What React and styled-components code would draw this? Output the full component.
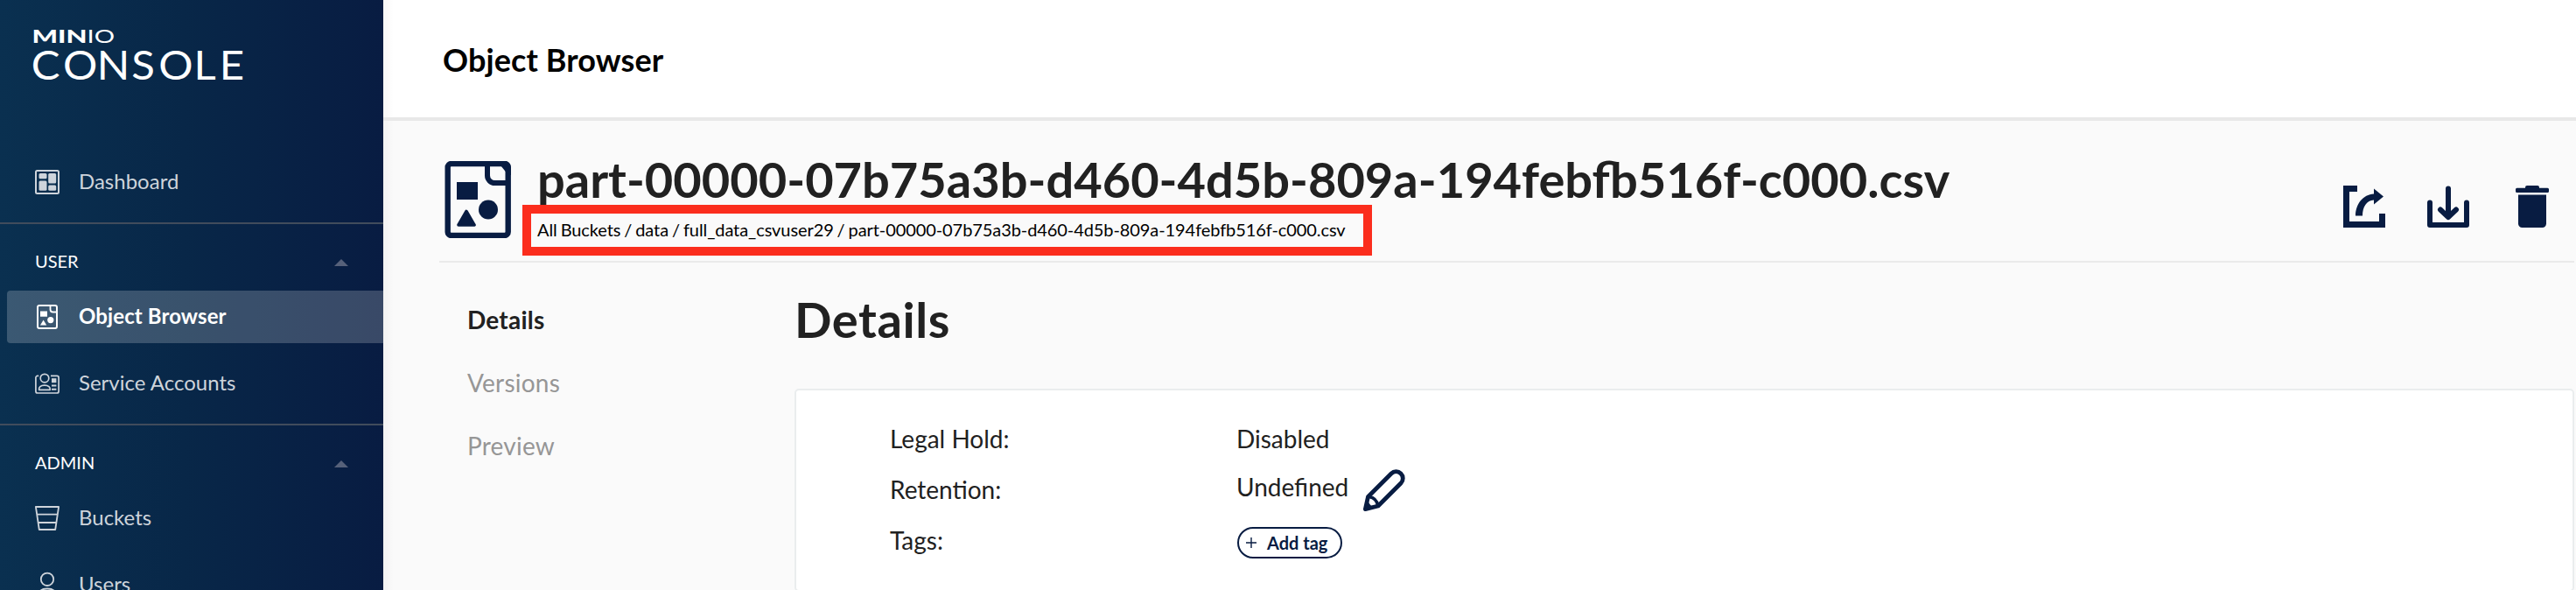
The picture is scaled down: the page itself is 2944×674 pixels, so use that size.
import React from "react";
import styled, { createGlobalStyle } from "styled-components";

const Global = createGlobalStyle`
  *, *::before, *::after { box-sizing: border-box; }
  body {
    margin: 0;
    background: #fafafa;
    font-family: Lato, sans-serif;
    color: #212121;
    overflow: hidden;
  }
`;

const NAVY = "#081c42";

const Page = styled.div`
  display: flex;
  height: 674px;
  overflow: hidden;
`;

/* ---------- Sidebar ---------- */

const Sidebar = styled.aside`
  flex: 0 0 438px;
  height: 100%;
  overflow: hidden;
  background: linear-gradient(90deg, #0a3050 0%, #082748 48%, #081c42 100%);
`;

const Brand = styled.div`
  height: 178px;
  padding: 20px 0 0 26px;
`;

const BrandLogo = styled.svg`
  display: block;
  width: 280px;
  height: 90px;
  overflow: visible;
  fill: #fff;
  font-family: Lato, sans-serif;
`;

const NavGroup = styled.nav`
  display: flex;
  flex-direction: column;
  gap: 16px;
  padding: 0 0 16px;
  border-bottom: 2px solid #414c5c;
`;

const NavItem = styled.a`
  display: flex;
  align-items: center;
  height: 60px;
  margin-left: 8px;
  padding-left: 32px;
  border-radius: 4px 0 0 4px;
  color: ${(p) => (p.$active ? "#fff" : "#ced4db")};
  background: ${(p) => (p.$active ? "rgba(255, 255, 255, 0.2)" : "transparent")};
  font-size: 24px;
  font-weight: ${(p) => (p.$active ? 700 : 400)};
  letter-spacing: ${(p) => (p.$active ? "0.1px" : "0")};
  line-height: 28px;
`;

const NavIcon = styled.svg`
  flex: none;
  display: block;
  width: 28px;
  height: 28px;
  margin-right: 22px;
  overflow: visible;
`;

const NavLabel = styled.span`
  padding-bottom: 2px;
`;

const SectionHeader = styled.div`
  display: flex;
  align-items: center;
  justify-content: space-between;
  height: 76px;
  padding: 8px 40px 0 40px;
  margin-bottom: -16px;
  color: #fff;
  font-size: 20px;
  line-height: 24px;
`;

const Caret = styled.span`
  width: 0;
  height: 0;
  margin-top: 4px;
  border-left: 8px solid transparent;
  border-right: 8px solid transparent;
  border-bottom: 8px solid #56617a;
`;

/* ---------- Main ---------- */

const Main = styled.main`
  flex: 1;
  min-width: 0;
  background: linear-gradient(90deg, rgba(0, 0, 0, 0.03), transparent 12px), #fafafa;
`;

const PageHeader = styled.header`
  height: 138px;
  padding: 46px 68px 0;
  border-bottom: 4px solid #e8e8e8;
  background: linear-gradient(90deg, rgba(0, 0, 0, 0.03), transparent 12px), #fff;
  color: #000;
  font-size: 36px;
  font-weight: 700;
  letter-spacing: 0.1px;
  line-height: 44px;
`;

const Content = styled.div`
  padding: 0 2px 0 64px;
`;

const ObjectBar = styled.section`
  display: flex;
  height: 162px;
  padding: 46px 24px 0 6px;
  border-bottom: 2px solid #eaeaea;
`;

const ObjectIcon = styled.svg`
  flex: none;
  display: block;
  width: 76px;
  height: 88px;
`;

const ObjectText = styled.div`
  flex: 1;
  padding-left: 30px;
`;

const ObjectName = styled.h1`
  margin: -13px 0 0;
  font-size: 56px;
  font-weight: 700;
  line-height: 68px;
  white-space: nowrap;
`;

const Breadcrumb = styled.div`
  position: relative;
  width: fit-content;
  margin-top: 11px;
  color: #000;
  font-size: 20px;
  letter-spacing: -0.08px;
  word-spacing: -1.1px;
  line-height: 24px;
  white-space: nowrap;
`;

const Highlight = styled.div`
  position: absolute;
  top: -16px;
  left: -17px;
  width: 971px;
  height: 58px;
  border: 10px solid #fb2d1d;
`;

const Actions = styled.div`
  display: flex;
  gap: 48px;
  padding: 28px 0 0;
`;

const ActionIcon = styled.svg`
  display: block;
  width: 48px;
  height: 48px;
  fill: ${NAVY};
`;

const Columns = styled.div`
  display: flex;
`;

const Tabs = styled.div`
  flex: 0 0 406px;
  padding: 29px 0 0 32px;
`;

const Tab = styled.div`
  height: 72px;
  line-height: 72px;
  font-size: 28px;
  font-weight: ${(p) => (p.$active ? 700 : 400)};
  letter-spacing: 0.22px;
  color: ${(p) => (p.$active ? "#212121" : "#969696")};
`;

const Panel = styled.div`
  flex: 1;
`;

const PanelTitle = styled.h2`
  margin: 0;
  padding: 31px 0 0;
  height: 144px;
  font-size: 56px;
  font-weight: 700;
  letter-spacing: 0.6px;
  line-height: 68px;
`;

const Card = styled.div`
  height: 232px;
  padding: 26px 107px 0;
  border: 2px solid #eaedee;
  border-radius: 5px;
  background: #fff;
`;

const Row = styled.div`
  display: grid;
  grid-template-columns: 396px 1fr;
  align-items: center;
  height: 58px;
  font-size: 28px;
  line-height: 34px;
`;

const Value = styled.div`
  display: flex;
  align-items: center;
`;

const Retention = styled.span`
  width: 145px;
  padding-bottom: 6px;
`;

const EditIcon = styled.svg`
  display: block;
  width: 48px;
  height: 48px;
  margin-top: 2px;
`;

const TagButton = styled.button`
  display: flex;
  align-items: center;
  gap: 12px;
  width: 120px;
  height: 36px;
  margin: 6px 0 0 1px;
  padding: 0 0 0 8px;
  border: 2px solid ${NAVY};
  border-radius: 18px;
  background: #fff;
  color: ${NAVY};
  font: 700 20px/24px Lato, sans-serif;
  white-space: nowrap;
`;

/* ---------- Drawings ---------- */

const DashboardIcon = () => (
  <NavIcon viewBox="0 0 28 28" fill="currentColor">
    <rect x="1" y="1" width="26" height="26" rx="1.5" fill="none" stroke="currentColor" strokeWidth="2" />
    <rect x="4.5" y="4" width="9" height="6.2" rx="1.5" />
    <rect x="15.2" y="4" width="9" height="11.4" rx="1.5" />
    <rect x="4.5" y="12.4" width="9" height="11.4" rx="1.5" />
    <rect x="15.2" y="17.6" width="9" height="6.2" rx="1.5" />
  </NavIcon>
);

const ObjectsNavIcon = () => (
  <NavIcon viewBox="0 0 28 28" fill="currentColor">
    <rect x="3" y="1" width="22" height="26" rx="2" fill="none" stroke="currentColor" strokeWidth="2" />
    <path d="M17.5 1v4.5a3 3 0 0 0 3 3H25" fill="none" stroke="currentColor" strokeWidth="1.8" />
    <rect x="6" y="7.5" width="8" height="6.2" />
    <circle cx="17.8" cy="17.6" r="3.6" />
    <path d="M9.6 17.6 13.2 23.6H6z" />
  </NavIcon>
);

const ServiceIcon = () => (
  <NavIcon viewBox="0 0 28 28" fill="none" stroke="currentColor" strokeWidth="1.7">
    <path d="M4.2 5.4H2.9a2 2 0 0 0-2 2v15.6a2 2 0 0 0 2 2h22.2a2 2 0 0 0 2-2V7.4a2 2 0 0 0-2-2H18" />
    <circle cx="11" cy="8.1" r="4.8" />
    <path d="M4.6 21.4c-.5-3.2 1.8-5.2 6.3-5.2s6.8 2 6.3 5.2z" strokeLinejoin="round" />
    <rect x="19" y="8.2" width="5.4" height="5" fill="currentColor" stroke="none" />
    <path d="M19 16.4h5.4M19 20.8h5.4" strokeWidth="2" />
  </NavIcon>
);

const BucketIcon = () => (
  <NavIcon viewBox="0 0 28 28" fill="none" stroke="currentColor" strokeWidth="1.8" strokeLinejoin="round">
    <path d="M.9 1h26.2L23.2 27H4.8zM2.2 9.7h23.6M3.4 19h21.2" />
  </NavIcon>
);

const UsersIcon = () => (
  <NavIcon viewBox="0 0 28 28" fill="none" stroke="currentColor" strokeWidth="1.8">
    <circle cx="14" cy="7.8" r="7.2" />
    <path d="M3.5 28c-.8-6.5 4-9.5 10.5-9.500S25.300 21.500 24.500 28z" />
  </NavIcon>
);

const ShareIcon = () => (
  <ActionIcon viewBox="0 0 48 48">
    <path d="M0 0h16v7H7v34h34v-9h7v16H0z" />
    <path d="M14 34.5c0-13 8.5-24.500 21-25V3.500L46 12.400 35 21.400V16.500c-8.500.5-13 8-13 18z" />
  </ActionIcon>
);

const DownloadIcon = () => (
  <ActionIcon viewBox="0 0 48 48">
    <path
      d="M3 19.500V45h42V19.500M24 3.500V34M15 27.500l9 8.500 9-8.500"
      fill="none"
      stroke={NAVY}
      strokeWidth="6"
      strokeLinecap="round"
      strokeLinejoin="round"
    />
  </ActionIcon>
);

const TrashIcon = () => (
  <ActionIcon viewBox="0 0 48 48">
    <path d="M16 2a2 2 0 0 1 2-2h12a2 2 0 0 1 2 2v.7h9.500a1.500 1.500 0 0 1 1.500 1.500V6.500A1.500 1.500 0 0 1 41.500 8h-35A1.500 1.500 0 0 1 5 6.500V4.200a1.500 1.500 0 0 1 1.500-1.500H16z" />
    <path d="M8 10.500h32V43.500a4.500 4.500 0 0 1-4.500 4.500h-23A4.500 4.500 0 0 1 8 43.500z" />
  </ActionIcon>
);

const PencilIcon = () => (
  <EditIcon viewBox="0 0 48 48" fill="none" stroke={NAVY} strokeWidth="4.8" strokeLinejoin="round">
    <path d="M5.500 31.500 32 5a7.700 7.700 0 0 1 11 11L17 42 2.400 45.600z" />
    <path d="M7 31.500c5.500 1 8.500 4 9.800 9.800" strokeWidth="3.6" />
    <path d="M2 45.800 4.500 36l5.800 7.600z" fill={NAVY} stroke="none" />
  </EditIcon>
);

const FileIcon = () => (
  <ObjectIcon viewBox="0 0 76 88" fill={NAVY}>
    <rect x="3.7" y="3" width="69" height="82" rx="4" fill="none" stroke={NAVY} strokeWidth="6.4" />
    <path d="M49 3v13.500a8.500 8.500 0 0 0 8.500 8.500H72" fill="none" stroke={NAVY} strokeWidth="6" />
    <path d="M60 0h9a7 7 0 0 1 7 7v9h-3z" />
    <rect x="14" y="24" width="24" height="20" />
    <circle cx="50" cy="55.5" r="11" />
    <path d="M25 57.500 34 73H16z" stroke={NAVY} strokeWidth="3.6" strokeLinejoin="round" />
  </ObjectIcon>
);

export default function App() {
  return (
    <Page>
      <Global />
      <Sidebar>
        <Brand>
          <BrandLogo viewBox="-12 -12 280 90">
            <text x="-1.5" y="17" fontSize="21" fontWeight="900" textLength="63" lengthAdjust="spacingAndGlyphs">MIN</text>
            <text x="61.5" y="17" fontSize="21" fontWeight="400" textLength="31.5" lengthAdjust="spacingAndGlyphs">IO</text>
            <text transform="scale(1.08 1)" x="-2.1 31.6 67.4 104 132.600 170 197" y="59.500" fontSize="45.500">CONSOLE</text>
          </BrandLogo>
        </Brand>
        <NavGroup>
          <NavItem><DashboardIcon /><NavLabel>Dashboard</NavLabel></NavItem>
        </NavGroup>
        <NavGroup>
          <SectionHeader>USER<Caret /></SectionHeader>
          <NavItem $active><ObjectsNavIcon /><NavLabel>Object Browser</NavLabel></NavItem>
          <NavItem><ServiceIcon /><NavLabel>Service Accounts</NavLabel></NavItem>
        </NavGroup>
        <NavGroup>
          <SectionHeader>ADMIN<Caret /></SectionHeader>
          <NavItem><BucketIcon /><NavLabel>Buckets</NavLabel></NavItem>
          <NavItem><UsersIcon /><NavLabel>Users</NavLabel></NavItem>
        </NavGroup>
      </Sidebar>
      <Main>
        <PageHeader>Object Browser</PageHeader>
        <Content>
          <ObjectBar>
            <FileIcon />
            <ObjectText>
              <ObjectName>part-00000-07b75a3b-d460-4d5b-809a-194febfb516f-c000.csv</ObjectName>
              <Breadcrumb>
                All Buckets / data / full_data_csvuser29 / part-00000-07b75a3b-d460-4d5b-809a-194febfb516f-c000.csv
                <Highlight />
              </Breadcrumb>
            </ObjectText>
            <Actions>
              <ShareIcon />
              <DownloadIcon />
              <TrashIcon />
            </Actions>
          </ObjectBar>
          <Columns>
            <Tabs>
              <Tab $active>Details</Tab>
              <Tab>Versions</Tab>
              <Tab>Preview</Tab>
            </Tabs>
            <Panel>
              <PanelTitle>Details</PanelTitle>
              <Card>
                <Row><span>Legal Hold:</span><Value>Disabled</Value></Row>
                <Row><span>Retention:</span><Value><Retention>Undefined</Retention><PencilIcon /></Value></Row>
                <Row>
                  <span>Tags:</span>
                  <TagButton>
                    <svg width="12" height="12" viewBox="0 0 12 12" stroke={NAVY} strokeWidth="1.4">
                      <path d="M6 0v12M0 6h12" />
                    </svg>
                    Add tag
                  </TagButton>
                </Row>
              </Card>
            </Panel>
          </Columns>
        </Content>
      </Main>
    </Page>
  );
}
